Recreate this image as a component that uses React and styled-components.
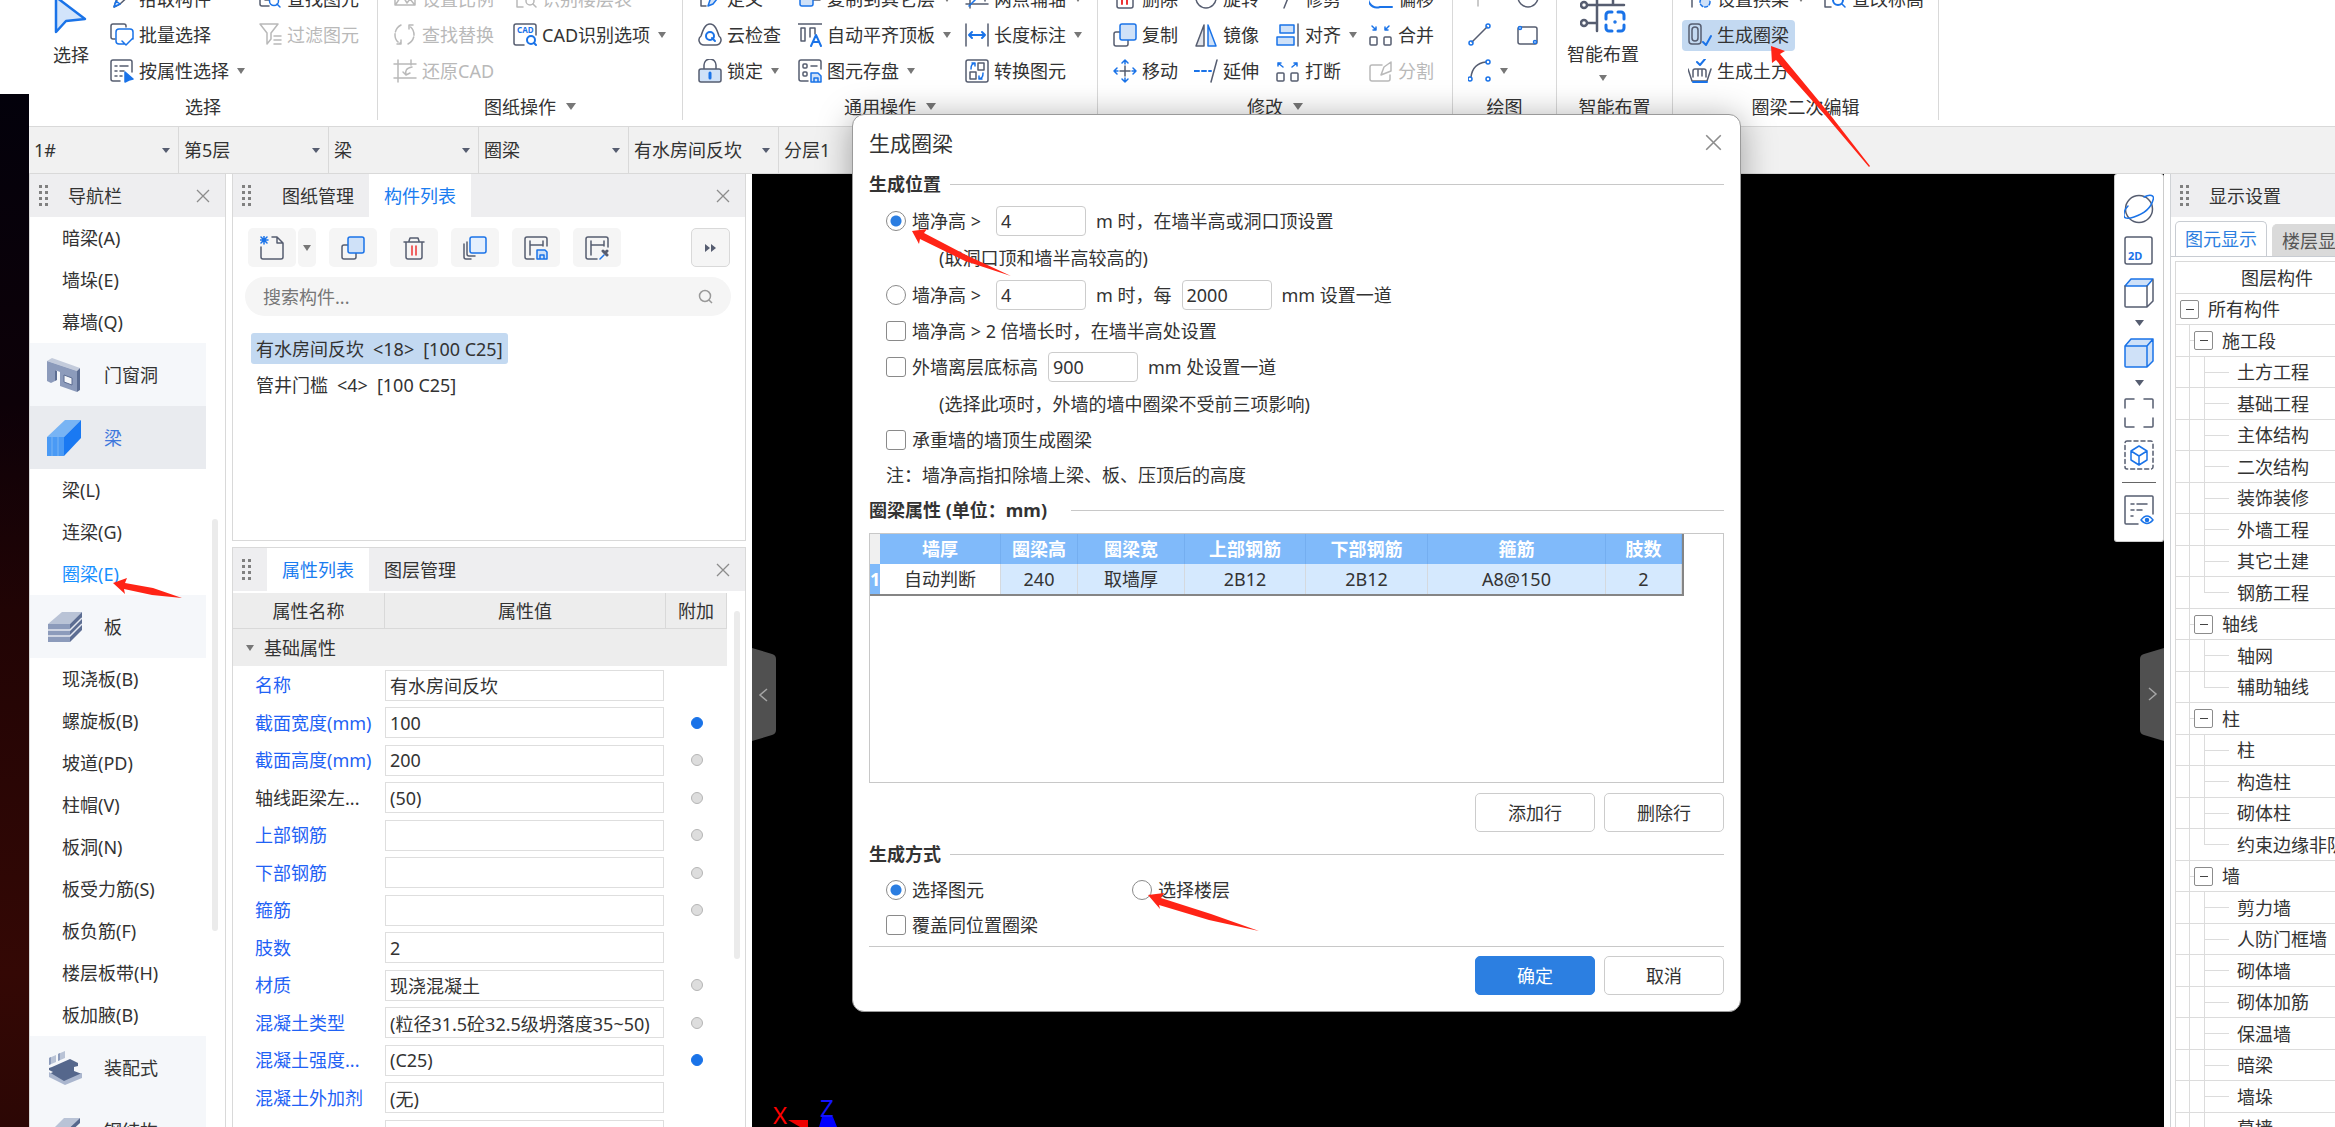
import React from 'react';
import styled, { createGlobalStyle, css } from 'styled-components';

const colors = {
  text: '#333',
  muted: '#b9b9b9',
  line: '#d9d9d9',
  header: '#eeeef0',
  blue: '#1a7cf0',
  label: '#1f62f5',
  picked: '#c3d9f1',
  ink: '#565d70'
};

const GlobalStyle = createGlobalStyle`
  * {
    box-sizing: border-box;
  }
  body {
    margin: 0;
    background: #fff;
    color: ${colors.text};
    font-family: 'Noto Sans', 'Noto Sans CJK SC', sans-serif;
    font-size: 18px;
    line-height: 24px;
  }
  button, input, select {
    font: inherit;
    color: inherit;
    margin: 0;
  }
  button {
    border: 0;
    padding: 0;
    background: none;
    white-space: nowrap;
    cursor: pointer;
  }
  ul {
    list-style: none;
    margin: 0;
    padding: 0;
  }
  svg {
    display: block;
    flex: none;
  }
`;

/* ---------- icons ---------- */

const Icon = ({ size = 24, box = 24, children }) => (
  <svg
    width={size}
    height={size}
    viewBox={`0 0 ${box} ${box}`}
    fill='none'
    stroke={colors.ink}
    strokeWidth='1.5'
    strokeLinecap='round'
    strokeLinejoin='round'
    aria-hidden='true'
  >
    {children}
  </svg>
);

const Caret = ({ width = 8, height = 6, color = '#777' }) => (
  <svg width={width} height={height} viewBox='0 0 8 6' preserveAspectRatio='none' aria-hidden='true'>
    <path d='M0 0h8L4 6z' fill={color} />
  </svg>
);

const Cross = ({ size = 14 }) => (
  <svg width={size} height={size} viewBox='0 0 14 14' stroke='#8c8c8c' strokeWidth='1.3' aria-hidden='true'>
    <path d='M1 1l12 12M13 1L1 13' />
  </svg>
);

const Grip = () => (
  <svg width='10' height='22' viewBox='0 0 10 22' fill='#808080' aria-hidden='true'>
    {[0, 6, 12, 18].map(y => (
      <g key={y}>
        <rect x='0' y={y} width='3' height='3' />
        <rect x='6' y={y} width='3' height='3' />
      </g>
    ))}
  </svg>
);

const B = '#1a73e8';
const L = '#cfe1f8';
const G = colors.muted;

const icons = {
  pick: <Icon><path d='M4 20l2-6L18 2l4 4L10 17z' /><path d='M4 20l2-6 4 3z' stroke={B} fill={L} /></Icon>,
  find: <Icon><path d='M11 19H4a2 2 0 0 1-2-2V2h20v6M7 6v7h4' /><circle cx='16' cy='14' r='4.5' stroke={B} /><path d='M19 17l3 3' stroke={B} /></Icon>,
  batch: <Icon><path d='M5 16H3a2 2 0 0 1-2-2V3a2 2 0 0 1 2-2h11a2 2 0 0 1 2 2v1' /><path d='M14 21H9a3 3 0 0 1-3-3V9a3 3 0 0 1 3-3h11a3 3 0 0 1 3 3v7M12 18l4 4 7-7' stroke={B} /></Icon>,
  filter: <Icon><path d='M2 1h18l-7 9v6l-4 5V10zM16 13h7M16 17h7M16 21h7' stroke={G} /></Icon>,
  byProp: <Icon><path d='M10 22H3a2 2 0 0 1-2-2V3a2 2 0 0 1 2-2h17a2 2 0 0 1 2 2v10M5 7h2M10 7h8M5 12h2M10 12h4M5 17h2M10 17h2' /><path d='M15 13l8 7-4 1-4 2z' fill={B} stroke={B} /></Icon>,
  scale: <Icon><path d='M2 2h20v16H2zM3 17l6-9 5 8 3-4 4 5' stroke={G} /></Icon>,
  storey: <Icon><path d='M2 3h8v7H2zM2 12h6M4 12v8h6M14 2h8v6' stroke={G} /><circle cx='17' cy='14' r='4' stroke={G} /><path d='M20 17l3 3' stroke={G} /></Icon>,
  replace: <Icon><path d='M8 2C4 4 2 8 2 12s2 7 5 8M4 21h4v-4M15 21c4-2 6-6 6-9s-2-8-5-9M20 2h-4v4' stroke={G} strokeDasharray='9 2' /></Icon>,
  cad: (
    <Icon>
      <path d='M11 22H3a2 2 0 0 1-2-2V3a2 2 0 0 1 2-2h18a2 2 0 0 1 2 2v9' />
      <text x='4' y='10' fontSize='8' fontWeight='700' fill={B} stroke='none'>CAD</text>
      <circle cx='18' cy='17' r='4' stroke={B} strokeWidth='2' /><path d='M21 20l2 2' stroke={B} strokeWidth='2' />
    </Icon>
  ),
  restore: <Icon><path d='M1 5h22M5 1v22M1 19h22M18 1v5M19 8c-6 1-7 4-6 8M10 13l3 3 4-2' stroke={G} /></Icon>,
  define: <Icon><path d='M8 19H3V2h8M6 7h1M6 12h1' /><path d='M10 19l2-6L20 4l3 3-8 10z' stroke={B} fill={L} /></Icon>,
  copyLayer: <Icon><path d='M9 2h13v11H12' /><rect x='2' y='6' width='13' height='13' rx='2' stroke={B} fill={L} /></Icon>,
  twoPoint: <Icon><path d='M5 2v19M1 17h22M20 2v12' /><path d='M4 19L20 3' stroke={B} /></Icon>,
  cloud: <Icon><path d='M6 22a5 5 0 0 1-3-9C5 7 7 1 12 1s7 6 9 12a5 5 0 0 1-3 9z' /><circle cx='12' cy='13' r='4' stroke={B} strokeWidth='2' /><path d='M14 15l3 3' stroke={B} strokeWidth='2' /></Icon>,
  autoAlign: <Icon><path d='M0 1h24M3 5h4v13H3zM12 14V5h5v6' /><path d='M13 23l5-11 5 11M15 19h6' stroke={B} strokeWidth='2' /></Icon>,
  length: <Icon><path d='M1 1v22M23 1v22' /><path d='M4 12h16M7 9l-3 3 3 3M17 9l3 3-3 3' stroke={B} strokeWidth='2' /></Icon>,
  lock: <Icon><path d='M6 10V6a6 6 0 0 1 12 0v4' /><rect x='1' y='10' width='22' height='13' rx='2' fill={L} /><path d='M12 14v5' stroke={B} strokeWidth='3' /></Icon>,
  saveElem: <Icon><path d='M10 22H3a2 2 0 0 1-2-2V3a2 2 0 0 1 2-2h18a2 2 0 0 1 2 2v7M13 7h6' /><rect x='5' y='5' width='4' height='4' rx='1' /><rect x='5' y='13' width='4' height='4' rx='1' /><path d='M13 14h7l3 3v6H13zM16 23v-4h4v4' stroke={B} fill={L} /></Icon>,
  convert: <Icon><rect x='1' y='1' width='22' height='22' rx='2' /><rect x='13' y='4' width='6' height='7' /><rect x='5' y='13' width='6' height='7' /><path d='M6 10c0-4 1-5 4-6M7 4h3v3M18 14c0 4-1 5-4 6M14 17v3h3' stroke={B} /></Icon>,
  remove: <Icon><path d='M1 4h22M4 4v15a2 2 0 0 0 2 2h12a2 2 0 0 0 2-2V4' /><path d='M9 9v8M14 9v8' stroke='#e33' strokeWidth='2' /></Icon>,
  rotate: <Icon><circle cx='12' cy='11' r='10' /></Icon>,
  trim: <Icon><path d='M16 1L8 21' /><path d='M2 5h8' stroke={B} /></Icon>,
  offset: <Icon><path d='M22 3H12a6 6 0 0 0 0 9h10' /><path d='M1 6a9 9 0 0 0 10 14h12' stroke={B} strokeWidth='2' /></Icon>,
  copy: <Icon><path d='M7 9H3a2 2 0 0 0-2 2v10a2 2 0 0 0 2 2h10a2 2 0 0 0 2-2v-4' /><rect x='7' y='1' width='16' height='16' rx='2' stroke={B} fill={L} /></Icon>,
  mirror: <Icon><path d='M10 2v21H2z' fill='#e3e5ea' /><path d='M14 2v21h8z' stroke={B} fill={L} /></Icon>,
  align: <Icon><rect x='4' y='2' width='14' height='8' stroke={B} fill={L} /><rect x='1' y='14' width='17' height='8' stroke={B} fill={L} /><path d='M22 1v22' /></Icon>,
  merge: <Icon><rect x='1' y='14' width='7' height='8' rx='1' /><rect x='15' y='14' width='7' height='8' rx='1' /><path d='M3 3l4 4M7 4v3H4M20 3l-4 4M16 4v3h3' stroke={B} /></Icon>,
  move: <Icon><path d='M12 7v10M7 12h10' /><path d='M12 1v4M9 4l3-3 3 3M12 19v4M9 20l3 3 3-3M1 12h4M4 9l-3 3 3 3M19 12h4M20 9l3 3-3 3' stroke={B} /></Icon>,
  extend: <Icon><path d='M23 1l-6 22' /><path d='M0 12h5M8 12h4M15 12h2' stroke={B} strokeWidth='2' /></Icon>,
  split: <Icon><rect x='1' y='14' width='7' height='8' rx='1' /><rect x='15' y='14' width='7' height='8' rx='1' /><path d='M7 8L2 4M2 7V4h3M16 8l5-4M21 7V4h-3' stroke={B} /></Icon>,
  divide: <Icon><path d='M13 6H3a2 2 0 0 0-2 2v12a2 2 0 0 0 2 2h16a2 2 0 0 0 2-2v-4M12 16l3-8 7-5v9z' stroke={G} /></Icon>,
  point: <Icon><path d='M10 9v10' stroke={G} /><circle cx='10' cy='6' r='2' /></Icon>,
  line: <Icon><path d='M4 19L19 4' /><circle cx='3' cy='20' r='2' stroke={B} /><circle cx='20' cy='3' r='2' stroke={B} /></Icon>,
  arc: <Icon><path d='M3 18C4 10 9 4 18 3' /><circle cx='2' cy='20' r='2' stroke={B} /><circle cx='20' cy='3' r='2' stroke={B} /><circle cx='20' cy='20' r='2' stroke={B} /></Icon>,
  circle: <Icon><circle cx='12' cy='10' r='10' /></Icon>,
  rect: <Icon><rect x='2' y='4' width='19' height='17' rx='2' /><circle cx='4' cy='5' r='1.5' stroke={B} fill='#fff' /><circle cx='19' cy='19' r='1.5' stroke={B} fill='#fff' /></Icon>,
  arch: <Icon><path d='M4 4v16M1 7h6' /><circle cx='17' cy='15' r='5' stroke={B} fill={L} strokeDasharray='3 2' /></Icon>,
  elevation: <Icon><path d='M9 2H2v18h6' /><circle cx='15' cy='13' r='5' stroke={B} strokeWidth='2' /><path d='M19 17l3 3' stroke={B} /></Icon>,
  ring: <Icon><rect x='1' y='1' width='12' height='20' rx='3' /><rect x='4' y='4' width='6' height='14' rx='3' /><path d='M15 19l3 3 5-9' stroke={B} strokeWidth='2' /></Icon>,
  earth: <Icon><path d='M0 10l4 12h15l4-12M5 18v-6a2 2 0 0 1 2-2h9a2 2 0 0 1 2 2v6M10 11v6M14 11v6' /><path d='M5 23h14M9 3l3 3 5-6' stroke={B} strokeWidth='2' /></Icon>
};

const CursorIcon = () => (
  <svg width='34' height='38' viewBox='0 0 34 38' aria-hidden='true'>
    <path d='M2 1v35l10-11 19-2z' fill='#d2e4fb' stroke={B} strokeWidth='2.5' strokeLinejoin='round' />
  </svg>
);

const SmartIcon = () => (
  <Icon size={46} box={46}>
    <g strokeWidth='2.5'>
      <path d='M8 18h36M8 36h8M17 2v42M33 2v16' />
      <circle cx='4' cy='18' r='3' /><circle cx='4' cy='36' r='3' />
    </g>
    <path d='M26 32v-4a3 3 0 0 1 3-3h3M38 25h3a3 3 0 0 1 3 3v4M44 38v3a3 3 0 0 1-3 3h-3M32 44h-3a3 3 0 0 1-3-3v-3' stroke={B} strokeWidth='3' />
    <circle cx='35' cy='35' r='1' stroke={B} />
  </Icon>
);

/* ---------- ribbon ---------- */

const Screen = styled.div`
  display: flex;
  height: 100vh;
  overflow: hidden;
`;

const DesktopEdge = styled.div`
  flex: none;
  width: 29px;
  margin-top: 94px;
  background: linear-gradient(#03010b, #0d0108 30%, #210405 50%, #340805 85%, #2c0705);
`;

const AppWindow = styled.div`
  flex: 1;
  min-width: 0;
  display: flex;
  flex-direction: column;
`;

const Ribbon = styled.div`
  flex: none;
  display: flex;
  align-items: flex-end;
  height: 127px;
  overflow: hidden;
  border-bottom: 1px solid ${colors.line};
`;

const RibbonGroup = styled.section`
  flex: none;
  width: ${p => p.$width}px;
`;

const RibbonBody = styled.div`
  display: flex;
  padding-left: 9px;
  height: 108px;
`;

const RibbonColumn = styled.div`
  flex: none;
  width: ${p => p.$width}px;
`;

const RibbonSlot = styled.div`
  display: flex;
  align-items: center;
  height: 36px;
`;

const RibbonButton = styled.button`
  display: flex;
  align-items: center;
  gap: 5px;
  height: 31px;
  padding: 0 6px;
  border-radius: 4px;
  background: ${p => (p.$active ? colors.picked : 'transparent')};
  color: ${p => (p.disabled ? colors.muted : colors.text)};
`;

const CaretWrap = styled.span`
  padding-left: 3px;
`;

const BigButton = styled.button`
  display: flex;
  flex-direction: column;
  align-items: center;
  justify-content: flex-end;
  gap: 9px;
  width: 100%;
  height: 108px;
  padding-bottom: ${p => (p.$plain ? 22 : 8)}px;
`;

const RibbonTitle = styled.div`
  display: flex;
  align-items: center;
  justify-content: center;
  gap: 10px;
  height: 37px;
  padding-bottom: 2px;
`;

const RibbonDivider = styled.div`
  flex: none;
  width: 1px;
  height: 144px;
  margin-bottom: 6px;
  background: ${colors.line};
`;

const ribbonGroups = [
  {
    title: '选择',
    width: 348,
    big: { label: '选择', icon: <CursorIcon />, width: 66, plain: true },
    columns: [
      { width: 148, items: [['pick', '拾取构件'], ['batch', '批量选择'], ['byProp', '按属性选择', { caret: true }]] },
      { width: 110, items: [['find', '查找图元'], ['filter', '过滤图元', { disabled: true }]] }
    ]
  },
  {
    title: '图纸操作',
    width: 304,
    caret: true,
    columns: [
      { width: 120, items: [['scale', '设置比例', { disabled: true }], ['replace', '查找替换', { disabled: true }], ['restore', '还原CAD', { disabled: true }]] },
      { width: 165, items: [['storey', '识别楼层表', { disabled: true }], ['cad', 'CAD识别选项', { caret: true }]] }
    ]
  },
  {
    title: '通用操作',
    width: 414,
    caret: true,
    columns: [
      { width: 100, items: [['define', '定义'], ['cloud', '云检查'], ['lock', '锁定', { caret: true }]] },
      { width: 167, items: [['copyLayer', '复制到其它层', { caret: true }], ['autoAlign', '自动平齐顶板', { caret: true }], ['saveElem', '图元存盘', { caret: true }]] },
      { width: 130, items: [['twoPoint', '两点辅轴', { caret: true }], ['length', '长度标注', { caret: true }], ['convert', '转换图元']] }
    ]
  },
  {
    title: '修改',
    width: 354,
    caret: true,
    columns: [
      { width: 81, items: [['remove', '删除'], ['copy', '复制'], ['move', '移动']] },
      { width: 82, items: [['rotate', '旋转'], ['mirror', '镜像'], ['extend', '延伸']] },
      { width: 93, items: [['trim', '修剪'], ['align', '对齐', { caret: true }], ['split', '打断']] },
      { width: 80, items: [['offset', '偏移'], ['merge', '合并'], ['divide', '分割', { disabled: true }]] }
    ]
  },
  {
    title: '绘图',
    width: 103,
    columns: [
      { width: 48, items: [['point', ''], ['line', ''], ['arc', '', { caret: true }]] },
      { width: 40, items: [['circle', ''], ['rect', '']] }
    ]
  },
  {
    title: '智能布置',
    width: 115,
    big: { label: '智能布置', icon: <SmartIcon />, width: 74 },
    columns: []
  },
  {
    title: '圈梁二次编辑',
    width: 265,
    columns: [
      { width: 135, items: [['arch', '设置拱梁', { caret: true }], ['ring', '生成圈梁', { active: true }], ['earth', '生成土方']] },
      { width: 115, items: [['elevation', '查改标高']] }
    ]
  }
];

const RibbonBar = () => (
  <Ribbon>
    {ribbonGroups.map(group => (
      <React.Fragment key={group.title}>
        <RibbonGroup $width={group.width}>
          <RibbonBody>
            {group.big && (
              <RibbonColumn $width={group.big.width}>
                <BigButton $plain={group.big.plain}>
                  {group.big.icon}
                  <span>{group.big.label}</span>
                  {!group.big.plain && <Caret />}
                </BigButton>
              </RibbonColumn>
            )}
            {group.columns.map((column, i) => (
              <RibbonColumn key={i} $width={column.width}>
                {column.items.map(([icon, label, opts = {}]) => (
                  <RibbonSlot key={icon}>
                    <RibbonButton
                      $active={opts.active}
                      disabled={opts.disabled}
                      aria-label={label || icon}
                    >
                      {icons[icon]}
                      {label && <span>{label}</span>}
                      {opts.caret && <CaretWrap><Caret /></CaretWrap>}
                    </RibbonButton>
                  </RibbonSlot>
                ))}
              </RibbonColumn>
            ))}
          </RibbonBody>
          <RibbonTitle>
            {group.title}
            {group.caret && <Caret width={10} height={7} />}
          </RibbonTitle>
        </RibbonGroup>
        <RibbonDivider />
      </React.Fragment>
    ))}
  </Ribbon>
);

/* ---------- context bar ---------- */

const ContextBar = styled.div`
  flex: none;
  display: flex;
  height: 47px;
  background: #f1f1f1;
  border-bottom: 1px solid ${colors.line};
`;

const ContextCell = styled.div`
  display: flex;
  align-items: center;
  width: 150px;
  padding: 0 8px 0 5px;
  border-right: 1px solid ${colors.line};
`;

const ContextSelect = styled.select`
  flex: 1;
  min-width: 0;
  appearance: none;
  border: 0;
  padding: 0;
  background: none;
`;

/* ---------- shared panel parts ---------- */

const Work = styled.main`
  flex: 1;
  min-height: 0;
  display: flex;
`;

const PanelHeader = styled.header`
  flex: none;
  display: flex;
  align-items: center;
  height: 43px;
  padding: 0 15px 0 9px;
  background: ${colors.header};
`;

const PanelTitle = styled.h2`
  flex: 1;
  margin: 0 0 0 19px;
  font-size: 18px;
  font-weight: 400;
  white-space: nowrap;
`;

const Tabs = styled.div`
  flex: 1;
  display: flex;
  align-self: stretch;
  margin-left: 15px;
`;

const Tab = styled.button`
  width: 102px;
  background: ${p => (p.$active ? '#fff' : 'transparent')};
  color: ${p => (p.$active ? colors.blue : colors.text)};
`;

const ScrollThumb = styled.div`
  flex: none;
  width: 6px;
  height: ${p => p.$length}px;
  margin-top: ${p => p.$top}px;
  border-radius: 3px;
  background: #ebebeb;
`;

/* ---------- navigation ---------- */

const NavPanel = styled.nav`
  flex: none;
  display: flex;
  flex-direction: column;
  width: 197px;
  overflow: hidden;
  border: solid ${colors.line};
  border-width: 0 1px 0 1px;
`;

const NavScroll = styled.div`
  display: flex;
  gap: 6px;
`;

const NavList = styled.ul`
  width: 176px;
`;

const NavItem = styled.button`
  display: block;
  width: 100%;
  height: 42px;
  padding-left: 32px;
  text-align: left;
  color: ${p => (p.$active ? '#1890ff' : colors.text)};
`;

const NavCategory = styled.button`
  display: flex;
  align-items: center;
  gap: 22px;
  width: 100%;
  height: 63px;
  padding-left: 16px;
  background: ${p => (p.$active ? '#e9ebef' : '#f5f7fa')};
  color: ${p => (p.$active ? '#3f78dc' : colors.text)};
`;

const solids = {
  opening: (
    <svg width='36' height='36' viewBox='0 0 36 36' aria-hidden='true'>
      <path d='M1 4l5-3 28 10-3 3z' fill='#c3cbdb' />
      <path d='M1 4l30 10v21l-17-6V15l-5-2v11l-4 2-4-2z' fill='#8c9bbb' />
      <path d='M31 14l3-3v22l-3 2z' fill='#5c6d92' />
      <path d='M9 13l2 1v9l-2 1z' fill='#5c6d92' />
      <path d='M18 18l8 3v7l-8-3z' fill='#f5f7fa' stroke='#5c6d92' />
    </svg>
  ),
  beam: (
    <svg width='36' height='36' viewBox='0 0 36 36' aria-hidden='true'>
      <path d='M1 17L19 0h16L18 17z' fill='#78b4f4' />
      <path d='M18 17L35 0v18L18 36z' fill='#1a79f2' />
      <path d='M1 17h17v19H1z' fill='#4a9af5' />
      <path d='M6 17v19M12 17v19' stroke='#78b4f4' />
    </svg>
  ),
  slab: (
    <svg width='36' height='36' viewBox='0 0 36 36' aria-hidden='true'>
      <path d='M2 15L16 3h20L24 15z' fill='#b9c3d6' />
      <path d='M24 15L36 3v18L24 33z' fill='#5c6d92' />
      <path d='M2 15h22v18H2z' fill='#8c9bbb' />
      <path d='M2 21h22L36 9M2 27h22l12-12' fill='none' stroke='#e4e8f0' strokeWidth='1.5' />
    </svg>
  ),
  prefab: (
    <svg width='36' height='36' viewBox='0 0 36 36' aria-hidden='true'>
      <path d='M3 18l3-1 18-8 8 4v3l-4 1v4l8 3-18 8L3 24l4-2-4-2z' fill='#55678c' />
      <path d='M3 22l15 9 18-8v5l-17 7-16-8z' fill='#aab6ce' />
      <path d='M3 8l7-3v7l-7 3zM12 4l7-3v7l-7 3z' fill='#b9c3d6' />
      <path d='M3 8v7l2-1V7zM12 4v7l2-1V3z' fill='#8c9bbb' />
    </svg>
  ),
  steel: (
    <svg width='36' height='36' viewBox='0 0 36 36' aria-hidden='true'>
      <path d='M1 22L18 5h16L16 22z' fill='#b9c3d6' />
      <path d='M34 5v5L22 21l4 6-10 9v-14z' fill='#55678c' />
      <path d='M1 22h15v5H1zM6 27h5v9H6z' fill='#8c9bbb' />
    </svg>
  )
};

const navEntries = [
  '暗梁(A)', '墙垛(E)', '幕墙(Q)',
  { label: '门窗洞', icon: 'opening' },
  { label: '梁', icon: 'beam', active: true },
  '梁(L)', '连梁(G)', '圈梁(E)',
  { label: '板', icon: 'slab' },
  '现浇板(B)', '螺旋板(B)', '坡道(PD)', '柱帽(V)', '板洞(N)', '板受力筋(S)', '板负筋(F)', '楼层板带(H)', '板加腋(B)',
  { label: '装配式', icon: 'prefab' },
  { label: '钢结构', icon: 'steel' }
];

const Navigation = () => (
  <NavPanel>
    <PanelHeader>
      <Grip />
      <PanelTitle>导航栏</PanelTitle>
      <button aria-label='关闭导航栏'><Cross /></button>
    </PanelHeader>
    <NavScroll>
      <NavList>
        {navEntries.map(entry =>
          entry.icon ? (
            <li key={entry.label}>
              <NavCategory $active={entry.active}>
                {solids[entry.icon]}
                {entry.label}
              </NavCategory>
            </li>
          ) : (
            <li key={entry}>
              <NavItem $active={entry === '圈梁(E)'}>{entry}</NavItem>
            </li>
          )
        )}
      </NavList>
      <ScrollThumb $top={302} $length={412} />
    </NavScroll>
  </NavPanel>
);

/* ---------- component list and properties ---------- */

const SideColumn = styled.div`
  flex: none;
  display: flex;
  flex-direction: column;
  gap: 6px;
  width: 514px;
  margin: 0 6px;
`;

const Panel = styled.section`
  display: flex;
  flex-direction: column;
  overflow: hidden;
  border: 1px solid ${colors.line};
  border-top-width: ${p => (p.$first ? 0 : 1)}px;
  ${p => (p.$first ? css`flex: none; height: 367px;` : css`flex: 1; min-height: 0; border-bottom: 0;`)}
`;

const Tools = styled.div`
  display: flex;
  align-items: center;
  gap: 13px;
  padding: 11px 15px 10px;
`;

const ToolPair = styled.div`
  display: flex;
  gap: 2px;
`;

const ToolButton = styled.button`
  display: flex;
  align-items: center;
  justify-content: center;
  width: ${p => p.$width || 48}px;
  height: 39px;
  border-radius: 5px;
  background: #f5f5f5;
`;

const MoreButton = styled(ToolButton)`
  margin-left: auto;
  border: 1px solid ${colors.line};
`;

const SearchBox = styled.label`
  display: flex;
  align-items: center;
  height: 39px;
  margin: 0 14px 0 12px;
  padding: 0 18px;
  border-radius: 20px;
  background: #f5f5f5;
`;

const SearchInput = styled.input`
  flex: 1;
  min-width: 0;
  border: 0;
  padding: 0;
  background: none;

  &::placeholder {
    color: #777;
    opacity: 1;
  }
`;

const ComponentItems = styled.ul`
  display: flex;
  flex-direction: column;
  align-items: flex-start;
  gap: 5px;
  padding: 17px 18px;
`;

const ComponentItem = styled.button`
  display: flex;
  align-items: center;
  gap: 9px;
  height: 31px;
  padding: 0 5px;
  border-radius: 3px;
  background: ${p => (p.$active ? colors.picked : 'transparent')};
`;

const PropScroll = styled.div`
  display: flex;
  gap: 7px;
  padding-top: 2px;
`;

const PropTable = styled.table`
  width: 494px;
  border-collapse: separate;
  border-spacing: 0;
  table-layout: fixed;
`;

const PropHead = styled.th`
  width: ${p => p.$width}px;
  height: 36px;
  padding: 0;
  font-weight: 400;
  background: #ededed;
  border: solid ${colors.line};
  border-width: 0 1px 1px 0;
`;

const PropGroup = styled.td`
  height: 37px;
  padding: 0 0 0 13px;
  background: #ededed;

  button {
    display: flex;
    align-items: center;
    gap: 10px;
  }
`;

const PropRow = styled.tr`
  height: ${p => (p.$odd ? 38 : 37)}px;

  td {
    padding: 0;
  }
`;

const PropName = styled.label`
  display: block;
  padding-left: 22px;
  white-space: nowrap;
  color: ${p => (p.$plain ? colors.text : colors.label)};
`;

const PropInput = styled.input`
  display: block;
  width: 279px;
  height: 31px;
  padding: 0 4px;
  border: 1px solid #dedede;
  background: #fff;
`;

const ExtraRadio = styled.input`
  appearance: none;
  display: block;
  width: 12px;
  height: 12px;
  margin: 0 auto;
  border: 1px solid #b5b5b5;
  border-radius: 50%;
  background: #ddd;

  &:checked {
    border-color: ${B};
    background: ${B};
  }
`;

const properties = [
  ['名称', '有水房间反坎', null],
  ['截面宽度(mm)', '100', true],
  ['截面高度(mm)', '200', false],
  ['轴线距梁左...', '(50)', false],
  ['上部钢筋', '', false],
  ['下部钢筋', '', false],
  ['箍筋', '', false],
  ['肢数', '2', null],
  ['材质', '现浇混凝土', false],
  ['混凝土类型', '(粒径31.5砼32.5级坍落度35~50)', false],
  ['混凝土强度...', '(C25)', true],
  ['混凝土外加剂', '(无)', null],
  ['', '', null]
];

const ComponentList = () => (
  <Panel $first>
    <PanelHeader>
      <Grip />
      <Tabs>
        <Tab>图纸管理</Tab>
        <Tab $active>构件列表</Tab>
      </Tabs>
      <button aria-label='关闭构件列表'><Cross /></button>
    </PanelHeader>
    <Tools>
      <ToolPair>
        <ToolButton aria-label='新建'>
          <Icon><path d='M1 11v10a2 2 0 0 0 2 2h18a2 2 0 0 0 2-2V7l-6-6h-5M17 1v6h6' /><path d='M1 1l6 6M7 1L1 7M4 0v8M0 4h8' stroke={B} /></Icon>
        </ToolButton>
        <ToolButton $width={18} aria-label='新建选项'><Caret /></ToolButton>
      </ToolPair>
      <ToolButton aria-label='复制'>{icons.copy}</ToolButton>
      <ToolButton aria-label='删除'>
        <Icon><path d='M2 6h20M4 6v15a2 2 0 0 0 2 2h12a2 2 0 0 0 2-2V6M7 5l1-3h8l1 3' /><path d='M10 10v9M14 10v9' stroke='#e33' /></Icon>
      </ToolButton>
      <ToolButton aria-label='层间复制'>
        <Icon><path d='M1 8v13a2 2 0 0 0 2 2h5M4 6v12a2 2 0 0 0 2 2h6' /><rect x='7' y='1' width='16' height='16' rx='2' stroke={B} fill='#e4effd' /></Icon>
      </ToolButton>
      <ToolButton aria-label='存档'>
        <Icon><path d='M10 23H3a2 2 0 0 1-2-2V3a2 2 0 0 1 2-2h18a2 2 0 0 1 2 2v7M6 5v14M19 5v5M6 9h13' /><path d='M13 14h8l2 2v7H13zM16 23v-4h4v4' stroke={B} fill={L} /></Icon>
      </ToolButton>
      <ToolButton aria-label='提取'>
        <Icon><path d='M12 23H3a2 2 0 0 1-2-2V3a2 2 0 0 1 2-2h18a2 2 0 0 1 2 2v8M6 5v14M19 5v5M6 9h13' /><path d='M15 23l4-4' stroke={B} /><path d='M18 15l4 4M20 17l2-2' strokeWidth='3' /></Icon>
      </ToolButton>
      <MoreButton $width={39} aria-label='更多'>
        <svg width='12' height='8' viewBox='0 0 12 8' fill={colors.ink} aria-hidden='true'><path d='M0 0l5 4-5 4zM6 0l5 4-5 4z' /></svg>
      </MoreButton>
    </Tools>
    <SearchBox>
      <SearchInput placeholder='搜索构件...' aria-label='搜索构件' />
      <svg width='15' height='15' viewBox='0 0 15 15' fill='none' stroke='#999' strokeWidth='1.5' aria-hidden='true'>
        <circle cx='7' cy='7' r='5.5' /><path d='M11 11l3 3' />
      </svg>
    </SearchBox>
    <ComponentItems>
      <li>
        <ComponentItem $active>
          <span>有水房间反坎</span><span>&lt;18&gt;</span><span>[100 C25]</span>
        </ComponentItem>
      </li>
      <li>
        <ComponentItem>
          <span>管井门槛</span><span>&lt;4&gt;</span><span>[100 C25]</span>
        </ComponentItem>
      </li>
    </ComponentItems>
  </Panel>
);

const PropertyList = () => (
  <Panel>
    <PanelHeader>
      <Grip />
      <Tabs>
        <Tab $active>属性列表</Tab>
        <Tab>图层管理</Tab>
      </Tabs>
      <button aria-label='关闭属性列表'><Cross /></button>
    </PanelHeader>
    <PropScroll>
      <PropTable>
        <thead>
          <tr>
            <PropHead $width={152}>属性名称</PropHead>
            <PropHead $width={281}>属性值</PropHead>
            <PropHead $width={61}>附加</PropHead>
          </tr>
        </thead>
        <tbody>
          <tr>
            <PropGroup colSpan={3}>
              <button><Caret />基础属性</button>
            </PropGroup>
          </tr>
          {properties.map(([name, value, extra], i) => (
            <PropRow key={name} $odd={i % 2 === 0}>
              <td><PropName htmlFor={`prop-${i}`} $plain={i === 3}>{name}</PropName></td>
              <td><PropInput id={`prop-${i}`} defaultValue={value} /></td>
              <td>
                {extra !== null && (
                  <ExtraRadio type='checkbox' defaultChecked={extra} aria-label={`附加 ${name}`} />
                )}
              </td>
            </PropRow>
          ))}
        </tbody>
      </PropTable>
      <ScrollThumb $top={18} $length={348} />
    </PropScroll>
  </Panel>
);

/* ---------- model canvas ---------- */

const Canvas = styled.div`
  position: relative;
  flex: 1;
  min-width: 0;
  background: #000;
`;

const ViewTools = styled.div`
  position: absolute;
  top: 0;
  right: 0;
  display: flex;
  flex-direction: column;
  align-items: center;
  gap: 12px;
  width: 50px;
  padding: 20px 0 16px;
  border: 1px solid #ccc;
  border-top: 0;
  border-radius: 3px;
  background: #fff;
`;

const ToolsRule = styled.hr`
  width: 34px;
  height: 1px;
  margin: 0;
  border: 0;
  background: #666;
`;

const FoldHandle = styled.button`
  position: absolute;
  top: 474px;
  ${p => p.$side}: 0;
`;

const Axes = styled.svg`
  position: absolute;
  left: 20px;
  bottom: 0;
`;

const ModelView = () => (
  <Canvas>
    <FoldHandle $side='left' aria-label='收起左侧'>
      <svg width='24' height='93' viewBox='0 0 24 93'>
        <path d='M0 0l20 6q4 1 4 5v71q0 4-4 5L0 93z' fill='#505050' />
        <path d='M15 41l-7 6 7 6' fill='none' stroke='#a5a5a5' strokeWidth='1.5' />
      </svg>
    </FoldHandle>
    <FoldHandle $side='right' aria-label='收起右侧'>
      <svg width='24' height='93' viewBox='0 0 24 93'>
        <path d='M24 0L4 6Q0 7 0 11v71q0 4 4 5l20 6z' fill='#505050' />
        <path d='M9 40l7 6-7 6' fill='none' stroke='#a5a5a5' strokeWidth='1.5' />
      </svg>
    </FoldHandle>
    <ViewTools>
      <button aria-label='动态观察'>
        <Icon size={30} box={30}>
          <circle cx='15' cy='15' r='13.5' />
          <path d='M20 3c6-3 11-2 9 3-2 8-10 14-19 17-6 2-11 2-10-3 0-3 2-6 4-8' stroke={B} />
        </Icon>
      </button>
      <button aria-label='二维'>
        <Icon size={30} box={30}>
          <rect x='1' y='1' width='27' height='27' rx='2' />
          <text x='4' y='24' fontSize='11' fontWeight='700' fill={B} stroke='none'>2D</text>
        </Icon>
      </button>
      <button aria-label='俯视'>
        <Icon size={30} box={30}>
          <path d='M1 8l6-7h22l-6 7z' stroke={B} fill={L} />
          <path d='M1 8v20a1 1 0 0 0 1 1h21V8M23 29l6-6V2' />
        </Icon>
      </button>
      <Caret width={9} color={colors.ink} />
      <button aria-label='实体'>
        <Icon size={30} box={30}>
          <path d='M1 8l6-7h22v22l-6 6H2a1 1 0 0 1-1-1zM1 8h22v21M23 8l6-7' stroke={B} fill={L} />
        </Icon>
      </button>
      <Caret width={9} color={colors.ink} />
      <button aria-label='全屏'>
        <Icon size={30} box={30}>
          <path d='M1 10V2a1 1 0 0 1 1-1h8M20 1h8a1 1 0 0 1 1 1v8M29 20v8a1 1 0 0 1-1 1h-8M10 29H2a1 1 0 0 1-1-1v-8' />
        </Icon>
      </button>
      <button aria-label='局部三维'>
        <Icon size={30} box={30}>
          <rect x='1' y='1' width='28' height='28' rx='2' strokeDasharray='4 3' />
          <path d='M15 6l8 5v9l-8 5-8-5v-9zM7 11l8 5 8-5M15 16v9' stroke={B} />
        </Icon>
      </button>
      <ToolsRule />
      <button aria-label='显示设置'>
        <Icon size={30} box={30}>
          <path d='M14 29H2a1 1 0 0 1-1-1V2a1 1 0 0 1 1-1h26a1 1 0 0 1 1 1v17M7 9h3M13 9h10M7 15h3M13 15h5M7 21h2' />
          <path d='M17 25q6-8 12 0-6 7-12 0z' stroke={B} /><circle cx='23' cy='25' r='1.5' stroke={B} fill={B} />
        </Icon>
      </button>
    </ViewTools>
    <Axes width='80' height='30' viewBox='0 0 80 30'>
      <text x='1' y='27' fontSize='24' fill='#f00'>X</text>
      <path d='M16 23h20v7H28z' fill='#e00' />
      <text x='48' y='20' fontSize='24' fill='#1414ff'>Z</text>
      <path d='M47 30l3-10h11l4 10z' fill='#00f' />
    </Axes>
  </Canvas>
);

/* ---------- display settings ---------- */

const DisplayPanel = styled.aside`
  flex: none;
  width: 171px;
  padding-left: 6px;
  overflow: hidden;
`;

const DisplayBody = styled.div`
  height: 100%;
  border-left: 1px solid #cfd2d6;
`;

const DisplayTabs = styled.div`
  display: flex;
  align-items: flex-end;
  gap: 5px;
  height: 40px;
  padding-left: 4px;
  border-bottom: 1px solid #c8ccd2;
`;

const DisplayTab = styled.button`
  flex: none;
  height: ${p => (p.$active ? 35 : 32)}px;
  padding: 0 9px;
  border: 1px solid ${p => (p.$active ? '#c8ccd2' : '#dadada')};
  border-bottom: 0;
  border-radius: 5px 5px 0 0;
  background: ${p => (p.$active ? '#fff' : '#dadada')};
  color: ${p => (p.$active ? '#2d7fe0' : '#555')};
`;

const Tree = styled.ul`
  width: 260px;
  margin: 4px 0 0 4px;
  border: solid ${colors.line};
  border-width: 1px 0 0 1px;
`;

const TreeHead = styled.li`
  height: 32px;
  padding-left: 65px;
  line-height: 32px;
  border-bottom: 1px solid #dcdcdc;
`;

const TreeRow = styled.li`
  display: flex;
  align-items: center;
  height: ${p => (p.$odd ? 32 : 31)}px;
  padding-left: ${p => (p.$root ? 4 : 13)}px;
  border-bottom: 1px solid #dcdcdc;
  white-space: nowrap;
`;

const Guide = styled.span`
  flex: none;
  align-self: stretch;
  width: 15px;
  border-left: 1px solid #dcdcdc;
`;

const Stub = styled(Guide)`
  width: 5px;
  background: linear-gradient(#dcdcdc, #dcdcdc) 0 50% / 5px 1px no-repeat;
`;

const Branch = styled.span`
  flex: none;
  align-self: stretch;
  width: 33px;
  background:
    linear-gradient(#dcdcdc, #dcdcdc) 0 0 / 1px ${p => (p.$last ? '50%' : '100%')} no-repeat,
    linear-gradient(#dcdcdc, #dcdcdc) 0 50% / 25px 1px no-repeat;
`;

const Expander = styled.button`
  flex: none;
  display: flex;
  align-items: center;
  justify-content: center;
  width: 19px;
  height: 19px;
  margin-right: 9px;
  border: 1px solid #8c8c8c;
  border-radius: 2px;
  background: #fff;

  &::before {
    content: '';
    width: 8px;
    height: 1px;
    background: #444;
  }
`;

const layers = [
  ['施工段', ['土方工程', '基础工程', '主体结构', '二次结构', '装饰装修', '外墙工程', '其它土建', '钢筋工程']],
  ['轴线', ['轴网', '辅助轴线']],
  ['柱', ['柱', '构造柱', '砌体柱', '约束边缘非阴影区']],
  ['墙', ['剪力墙', '人防门框墙', '砌体墙', '砌体加筋', '保温墙', '暗梁', '墙垛', '幕墙', '']]
];

const treeRows = [{ level: 0, label: '所有构件' }];
layers.forEach(([label, children]) => {
  treeRows.push({ level: 1, label });
  children.forEach((child, i) =>
    treeRows.push({ level: 2, label: child, last: i === children.length - 1 })
  );
});

const DisplaySettings = () => (
  <DisplayPanel>
    <DisplayBody>
      <PanelHeader>
        <Grip />
        <PanelTitle>显示设置</PanelTitle>
      </PanelHeader>
      <DisplayTabs>
        <DisplayTab $active>图元显示</DisplayTab>
        <DisplayTab>楼层显示</DisplayTab>
      </DisplayTabs>
      <Tree>
        <TreeHead>图层构件</TreeHead>
        {treeRows.map((row, i) => (
          <TreeRow key={i} $root={row.level === 0} $odd={i % 2 === 1}>
            {row.level === 1 && <Stub />}
            {row.level === 2 && <Guide />}
            {row.level === 2 && <Branch $last={row.last} />}
            {row.level < 2 && <Expander aria-label={`收起${row.label}`} />}
            {row.label}
          </TreeRow>
        ))}
      </Tree>
    </DisplayBody>
  </DisplayPanel>
);

/* ---------- dialog ---------- */

const Dialog = styled.form`
  position: absolute;
  left: 852px;
  top: 114px;
  width: 889px;
  padding: 0 16px 16px;
  border: 1px solid #9a9a9a;
  border-radius: 12px;
  background: #fff;
  box-shadow: 0 4px 34px rgba(0, 0, 0, 0.35);
`;

const DialogHead = styled.header`
  display: flex;
  align-items: center;
  justify-content: space-between;
  height: 51px;
  padding: 4px 2px 0 0;
`;

const DialogTitle = styled.h1`
  margin: 0;
  font-size: 21px;
  font-weight: 400;
`;

const SectionTitle = styled.h3`
  display: flex;
  align-items: center;
  gap: ${p => p.$gap || 9}px;
  height: 36px;
  margin: 0;
  font-size: 18px;
  font-weight: 700;

  &::after {
    content: '';
    flex: 1;
    height: 1px;
    background: #c8c8c8;
  }
`;

const Line = styled.div`
  display: flex;
  align-items: center;
  gap: 10px;
  height: ${p => (p.$tight ? 35 : 37)}px;
  padding-left: ${p => p.$indent || 17}px;
  white-space: nowrap;
`;

const Choice = styled.label`
  display: flex;
  align-items: center;
  gap: 6px;
  margin-right: ${p => p.$after || 0}px;
`;

const RadioDot = styled.input`
  appearance: none;
  width: 20px;
  height: 20px;
  border: 1px solid #8a8a8a;
  border-radius: 50%;
  background: #fff;

  &:checked {
    background: radial-gradient(circle, #2a7de1 0 5px, #fff 6px);
  }
`;

const TickBox = styled.input`
  appearance: none;
  width: 20px;
  height: 20px;
  border: 1px solid #8a8a8a;
  border-radius: 3px;
  background: #fff;
`;

const NumberField = styled.input`
  width: 90px;
  height: 30px;
  padding: 0 4px;
  border: 1px solid #ccc;
  border-radius: 4px;
`;

const GridBox = styled.div`
  height: 250px;
  margin-top: 5px;
  border: 1px solid #c8c8c8;
`;

const BeamTable = styled.table`
  width: 814px;
  table-layout: fixed;
  border-collapse: separate;
  border-spacing: 0;
  border: solid #858585;
  border-width: 0 2px 2px 0;
  text-align: center;

  th, td {
    padding: 0;
    height: 30px;
  }
`;

const BeamHead = styled.th`
  width: ${p => p.$width}px;
  color: #fff;
  background: #80bafa;
  border-right: 1px solid #74aef0;
`;

const Corner = styled.th`
  width: 10px;
  background: #f0f0f0;
`;

const RowNumber = styled.th`
  color: #fff;
  background: #80bafa;
`;

const BeamCell = styled.td`
  background: ${p => (p.$editing ? '#fff' : '#d5e9fe')};
  border-right: 1px solid #d5d9de;
`;

const Actions = styled.div`
  display: flex;
  justify-content: flex-end;
  gap: 9px;
  padding: ${p => (p.$footer ? '9px 0 0' : '10px 0 4px')};
  border-top: ${p => (p.$footer ? '1px solid #c8c8c8' : '0')};
  margin-top: ${p => (p.$footer ? 4 : 0)}px;
`;

const DialogButton = styled.button`
  width: 120px;
  height: 39px;
  border: 1px solid ${p => (p.$primary ? '#2c7fe1' : '#ccc')};
  border-radius: 5px;
  background: ${p => (p.$primary ? '#2c7fe1' : '#fff')};
  color: ${p => (p.$primary ? '#fff' : colors.text)};
`;

const beamColumns = [
  ['墙厚', 121, '自动判断'],
  ['圈梁高', 77, '240'],
  ['圈梁宽', 107, '取墙厚'],
  ['上部钢筋', 121, '2B12'],
  ['下部钢筋', 122, '2B12'],
  ['箍筋', 178, 'A8@150'],
  ['肢数', 76, '2']
];

const RingBeamDialog = () => (
  <Dialog role='dialog' aria-labelledby='dialog-title' onSubmit={e => e.preventDefault()}>
    <DialogHead>
      <DialogTitle id='dialog-title'>生成圈梁</DialogTitle>
      <button type='button' aria-label='关闭'><Cross size={17} /></button>
    </DialogHead>

    <SectionTitle>生成位置</SectionTitle>
    <Line>
      <Choice $after={5}><RadioDot type='radio' name='place' defaultChecked />墙净高 &gt;</Choice>
      <NumberField defaultValue='4' aria-label='墙净高' />
      m 时，在墙半高或洞口顶设置
    </Line>
    <Line $indent={70}>(取洞口顶和墙半高较高的)</Line>
    <Line>
      <Choice $after={5}><RadioDot type='radio' name='place' />墙净高 &gt;</Choice>
      <NumberField defaultValue='4' aria-label='墙净高' />
      m 时，每
      <NumberField defaultValue='2000' aria-label='间距' />
      mm 设置一道
    </Line>
    <Line $tight>
      <Choice><TickBox type='checkbox' />墙净高 &gt; 2 倍墙长时，在墙半高处设置</Choice>
    </Line>
    <Line>
      <Choice><TickBox type='checkbox' />外墙离层底标高</Choice>
      <NumberField defaultValue='900' aria-label='外墙离层底标高' />
      mm 处设置一道
    </Line>
    <Line $indent={70}>(选择此项时，外墙的墙中圈梁不受前三项影响)</Line>
    <Line $tight>
      <Choice><TickBox type='checkbox' />承重墙的墙顶生成圈梁</Choice>
    </Line>
    <Line $tight>注：墙净高指扣除墙上梁、板、压顶后的高度</Line>

    <SectionTitle $gap={24}>圈梁属性 (单位：mm)</SectionTitle>
    <GridBox>
      <BeamTable>
        <thead>
          <tr>
            <Corner />
            {beamColumns.map(([name, width]) => (
              <BeamHead key={name} $width={width}>{name}</BeamHead>
            ))}
          </tr>
        </thead>
        <tbody>
          <tr>
            <RowNumber>1</RowNumber>
            {beamColumns.map(([name, , value], i) => (
              <BeamCell key={name} $editing={i === 0}>{value}</BeamCell>
            ))}
          </tr>
        </tbody>
      </BeamTable>
    </GridBox>
    <Actions>
      <DialogButton type='button'>添加行</DialogButton>
      <DialogButton type='button'>删除行</DialogButton>
    </Actions>

    <SectionTitle>生成方式</SectionTitle>
    <Line $tight>
      <Choice $after={138}><RadioDot type='radio' name='mode' defaultChecked />选择图元</Choice>
      <Choice><RadioDot type='radio' name='mode' />选择楼层</Choice>
    </Line>
    <Line $tight>
      <Choice><TickBox type='checkbox' />覆盖同位置圈梁</Choice>
    </Line>
    <Actions $footer>
      <DialogButton $primary type='submit'>确定</DialogButton>
      <DialogButton type='button'>取消</DialogButton>
    </Actions>
  </Dialog>
);

/* ---------- red pointer marks over the windows ---------- */

const Marks = styled.svg`
  position: absolute;
  left: 0;
  top: 0;
  pointer-events: none;
`;

const PointerMarks = () => (
  <Marks width='1900' height='960' viewBox='0 0 1900 960' fill='#ff2416' aria-hidden='true'>
    <path d='M1771 46l14 5-5 3 48 58 42 54-1 1-44-52-49-55-4 3z' />
    <path d='M113 583l14-5-2 5 28 5 29 10-30-3-28-6 1 5z' />
    <path d='M912 231l15-2-3 4 42 22 45 21-46-15-45-22-1 5z' />
    <path d='M1148 895l16-2-3 5 50 16 48 17-50-11-50-15 1 4z' />
  </Marks>
);

const App = () => (
  <>
    <GlobalStyle />
    <Screen>
      <DesktopEdge />
      <AppWindow>
        <RibbonBar />
        <ContextBar>
          {['1#', '第5层', '梁', '圈梁', '有水房间反坎', '分层1'].map(value => (
            <ContextCell key={value}>
              <ContextSelect aria-label={value}>
                <option>{value}</option>
              </ContextSelect>
              <Caret width={8} height={5} color={colors.ink} />
            </ContextCell>
          ))}
        </ContextBar>
        <Work>
          <Navigation />
          <SideColumn>
            <ComponentList />
            <PropertyList />
          </SideColumn>
          <ModelView />
          <DisplaySettings />
        </Work>
      </AppWindow>
    </Screen>
    <RingBeamDialog />
    <PointerMarks />
  </>
);

export default App;
